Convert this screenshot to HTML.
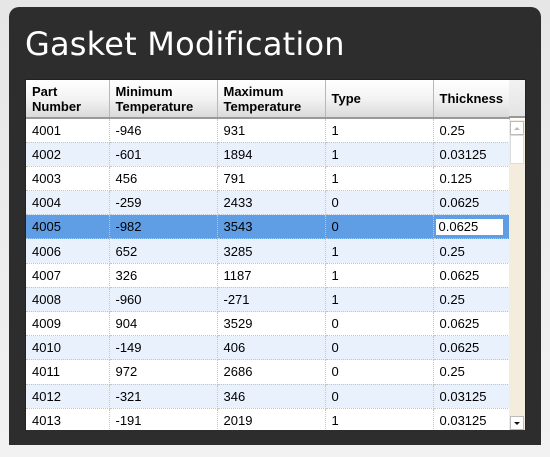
<!DOCTYPE html>
<html><head><style>
html,body{margin:0;padding:0;width:550px;height:457px;overflow:hidden;background:linear-gradient(#e6e6e6,#f2f2f2);}
.panel{position:absolute;left:9px;top:7px;width:532px;height:438px;background:#2d2d2d;border-radius:10px 10px 0 0;}
h1{position:absolute;left:25px;top:25px;margin:0;font:32px "DejaVu Sans",sans-serif;color:#fff;font-weight:normal;letter-spacing:0.2px;}
.grid{position:absolute;left:25px;top:79px;width:501px;height:351px;background:#fff;overflow:hidden;border:1px solid #222;border-bottom:none;box-sizing:border-box;}
table{border-collapse:collapse;position:absolute;left:0;top:0;table-layout:fixed;font:13px "Liberation Sans",Arial,sans-serif;color:#000;}
th{height:38px;background:linear-gradient(#fff,#f3f3f3 50%,#dadada);text-align:left;font:bold 13px "Liberation Sans",Arial,sans-serif;padding:0 0 0 6px;border-right:1px solid #b8b8b8;border-bottom:2px solid #999;line-height:15px;vertical-align:middle;box-sizing:border-box;}
td{height:24.2px;padding:0 0 0 6px;border-right:1px dotted #d0c4ac;border-bottom:1px dotted #d0c4ac;box-sizing:border-box;white-space:nowrap;}
tr.a td{background:#fff}
tr.b td{background:#e8f1fc}
tr.s td{background:#5f9ee5}
.ed{display:inline-block;background:#fff;width:64px;height:16px;line-height:16px;padding-left:3px;margin-left:-4px;}
.hdrfill{position:absolute;left:483px;top:0;width:17px;height:38px;background:linear-gradient(#f2f2f2,#e4e4e4);border-bottom:2px solid #999;box-sizing:border-box;}
.sb{position:absolute;left:483px;top:40px;width:17px;height:311px;background:#f4ecdc;}
.btn{position:absolute;left:1px;width:14px;height:14px;background:#fff;border:1px solid #bbb;box-sizing:border-box;}
.thumb{position:absolute;left:1px;top:15px;width:14px;height:29px;background:#fff;border:1px solid #ddd;box-sizing:border-box;}
</style></head><body>
<div class="panel"></div>
<h1>Gasket Modification</h1>
<div class="grid">
<table>
<colgroup><col style="width:83px"><col style="width:108px"><col style="width:108px"><col style="width:108px"><col style="width:76px"></colgroup>
<tr><th>Part<br>Number</th><th>Minimum<br>Temperature</th><th>Maximum<br>Temperature</th><th>Type</th><th>Thickness</th></tr>
<tr class="a"><td>4001</td><td>-946</td><td>931</td><td>1</td><td>0.25</td></tr>
<tr class="b"><td>4002</td><td>-601</td><td>1894</td><td>1</td><td>0.03125</td></tr>
<tr class="a"><td>4003</td><td>456</td><td>791</td><td>1</td><td>0.125</td></tr>
<tr class="b"><td>4004</td><td>-259</td><td>2433</td><td>0</td><td>0.0625</td></tr>
<tr class="s"><td>4005</td><td>-982</td><td>3543</td><td>0</td><td><span class="ed">0.0625</span></td></tr>
<tr class="b"><td>4006</td><td>652</td><td>3285</td><td>1</td><td>0.25</td></tr>
<tr class="a"><td>4007</td><td>326</td><td>1187</td><td>1</td><td>0.0625</td></tr>
<tr class="b"><td>4008</td><td>-960</td><td>-271</td><td>1</td><td>0.25</td></tr>
<tr class="a"><td>4009</td><td>904</td><td>3529</td><td>0</td><td>0.0625</td></tr>
<tr class="b"><td>4010</td><td>-149</td><td>406</td><td>0</td><td>0.0625</td></tr>
<tr class="a"><td>4011</td><td>972</td><td>2686</td><td>0</td><td>0.25</td></tr>
<tr class="b"><td>4012</td><td>-321</td><td>346</td><td>0</td><td>0.03125</td></tr>
<tr class="a"><td>4013</td><td>-191</td><td>2019</td><td>1</td><td>0.03125</td></tr>
</table>
<div class="hdrfill"></div>
<div class="sb">
<div class="btn" style="top:1px"><svg width="12" height="12" style="position:absolute;left:0;top:0"><path d="M3 8 L9 8 L6 5 Z" fill="#bbb"/></svg></div>
<div class="thumb"></div>
<div class="btn" style="top:296px"><svg width="12" height="12" style="position:absolute;left:0;top:0"><path d="M3 5 L9 5 L6 8 Z" fill="#111"/></svg></div>
</div>
</div>
</body></html>
